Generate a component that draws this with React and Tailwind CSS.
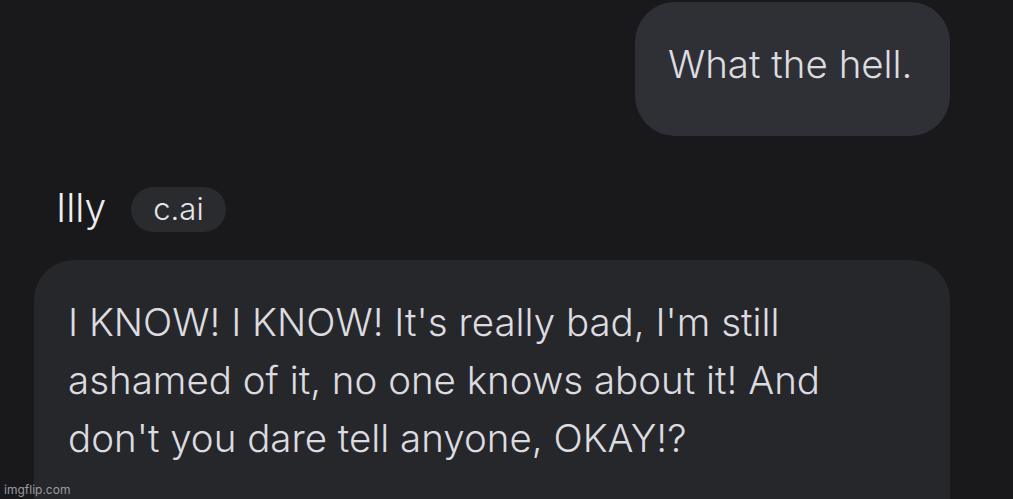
export default function App() {
  return (
    <div className="relative w-[1013px] h-[499px] overflow-hidden bg-[#19191c]" style={{ fontFamily: "Inter, 'Noto Sans', sans-serif" }}>
      <div className="flex flex-col">
        <div className="flex justify-end pr-[63px] pt-[2px]">
          <div className="h-[134px] w-[315px] rounded-[40px] bg-[#2f3035] flex items-center pl-[33px] pb-[8px] text-[38.5px] font-light text-[#dcdce0]">
            What the hell.
          </div>
        </div>
        <div className="flex items-center gap-[25px] pl-[56px] mt-[51px] h-[45px]">
          <span className="text-[39px] text-[#ececef] font-light leading-none pb-[4px]">Illy</span>
          <span className="h-[45px] px-[22px] rounded-full bg-[#2a2b2f] flex items-center text-[31px] text-[#e6e6ea] font-light">c.ai</span>
        </div>
        <div className="ml-[34px] mt-[28px] w-[916px] h-[280px] rounded-[40px] bg-[#26272b] pl-[34px] pt-[33px] text-[38.5px] leading-[58px] font-light text-[#dcdce0]">
          I KNOW! I KNOW! It's really bad, I'm still<br />
          ashamed of it, no one knows about it! And<br />
          don't you dare tell anyone, OKAY!?
        </div>
      </div>
      <div className="absolute left-[4px] bottom-[3px] text-[12px] text-[#9a9aa0] leading-none">imgflip.com</div>
    </div>
  );
}
